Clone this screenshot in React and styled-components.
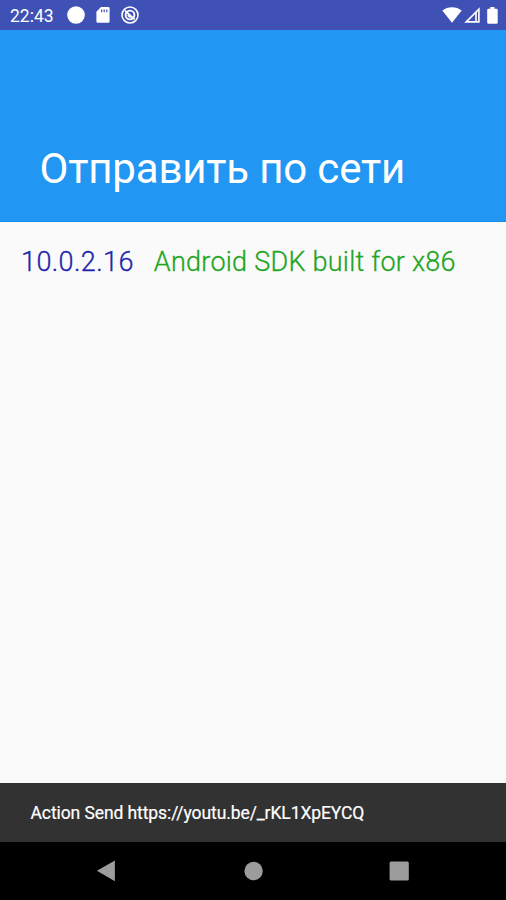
import React from "react";
import styled, { createGlobalStyle } from "styled-components";

//list of devices found on the local network
const devices = [{ ip: "10.0.2.16", name: "Android SDK built for x86" }];

const StatusBar = () => {
  return (
    <StatusWrapper>
      <Clock>22:43</Clock>
      <Notifications>
        <svg width="18" height="18" viewBox="0 0 18 18">
          <circle cx="9" cy="9" r="8.8" fill="#fff" />
        </svg>
        <svg width="14" height="16" viewBox="0 0 14 16">
          <path
            fill="#fff"
            fillRule="evenodd"
            d="M5 0h7.2Q13.6 0 13.6 1.4v12.8q0 1.5-1.4 1.5H1.8Q.4 15.7.4 14.2V4.8zM5 2.6v2.6h1.2V2.6zm2.6 0v2.6h1.2V2.6zm2.6 0v2.6h1.2V2.6z"
          />
        </svg>
        <svg width="18" height="18" viewBox="0 0 18 18">
          <g fill="none" stroke="#fff">
            <circle cx="9" cy="9" r="8" strokeWidth="1.6" />
            <circle cx="9" cy="9" r="4.4" strokeWidth="1.9" />
            <path strokeWidth="1.8" d="M4 4.7l9.6 8.6M7.2 8.6q.2 2.2 3.2 2.3" />
          </g>
        </svg>
      </Notifications>
      <SystemIcons>
        <svg width="20" height="16" viewBox="0 0 20 16">
          <path fill="#fff" d="M10 15.8.3 3.6Q4.4.2 10 .2t9.7 3.4z" />
        </svg>
        <svg width="16" height="16" viewBox="0 0 16 16">
          <path
            fill="#fff"
            fillRule="evenodd"
            d="M15.7.2v15.6H.2zM11.2 7.1l-6.9 6.9h6.9zM12.8 5.4v8.6h1.3V4.1z"
          />
        </svg>
        <svg width="11" height="17" viewBox="0 0 11 17">
          <path
            fill="#fff"
            d="M3.3 0h4.2v1.7h1.9q1.3 0 1.3 1.3v12.5q0 1.3-1.3 1.3H1.5Q.2 16.8.2 15.5V3q0-1.3 1.3-1.3h1.8z"
          />
        </svg>
      </SystemIcons>
    </StatusWrapper>
  );
};

const NavigationBar = () => {
  return (
    <NavWrapper>
      <NavButton aria-label="Back">
        <svg width="20" height="22" viewBox="0 0 20 22">
          <path fill="#9c9c9c" d="M17.9.4v20.8L-.1 10.8z" />
        </svg>
      </NavButton>
      <NavButton aria-label="Home">
        <svg width="20" height="20" viewBox="0 0 20 20">
          <circle cx="10.6" cy="10" r="9.2" fill="#9c9c9c" />
        </svg>
      </NavButton>
      <NavButton aria-label="Overview">
        <svg width="20" height="20" viewBox="0 0 20 20">
          <rect x=".6" y=".5" width="19.2" height="19" rx="1.5" fill="#9c9c9c" />
        </svg>
      </NavButton>
    </NavWrapper>
  );
};

const App = () => {
  return (
    <Wrapper>
      <GlobalStyle />
      <StatusBar />
      <Header>
        <Title>Отправить по сети</Title>
      </Header>
      <DeviceList>
        {devices.map((device) => {
          return (
            <Device key={device.ip}>
              <Address>{device.ip}</Address>
              <DeviceName>{device.name}</DeviceName>
            </Device>
          );
        })}
      </DeviceList>
      <Snackbar>
        <Message>Action Send https://youtu.be/_rKL1XpEYCQ</Message>
      </Snackbar>
      <NavigationBar />
    </Wrapper>
  );
};

export default App;

const GlobalStyle = createGlobalStyle`
  body {
    margin: 0;
    font-family: Roboto, sans-serif;
  }

  svg {
    display: block;
  }
`;

const Wrapper = styled.div`
  height: 900px;
  background-color: #fafafa;
  display: flex;
  flex-direction: column;
  overflow: hidden;
`;

const StatusWrapper = styled.div`
  box-sizing: border-box;
  height: 30px;
  padding: 0 8px 0 10px;
  background-color: #3f51b5;
  color: white;
  display: flex;
  align-items: center;
`;

const Clock = styled.span`
  width: 57px;
  font-size: 17.5px;
  line-height: 30px;
  padding-top: 2px;
`;

const Notifications = styled.div`
  display: flex;
  align-items: center;
  gap: 11px;
`;

const SystemIcons = styled.div`
  margin-left: auto;
  display: flex;
  align-items: center;
  gap: 2px;

  svg:last-child {
    margin-left: 5px;
  }
`;

const Header = styled.header`
  box-sizing: border-box;
  height: 192px;
  padding: 0 39.5px 27px;
  background-color: #2196f3;
  border-bottom: 1px solid #168be6;
  display: flex;
  align-items: flex-end;
`;

const Title = styled.h1`
  margin: 0;
  color: white;
  font-size: 42px;
  font-weight: 400;
  line-height: 50px;
  letter-spacing: -0.17px;
  white-space: nowrap;
`;

const DeviceList = styled.main`
  flex: 1;
  padding: 22px 21px;
`;

const Device = styled.div`
  display: flex;
  gap: 20px;
  font-size: 27px;
  font-weight: 300;
  line-height: 36px;
  letter-spacing: 0.4px;
  white-space: nowrap;
  -webkit-text-stroke: 0.3px;
`;

const Address = styled.span`
  color: #2024ac;
`;

const DeviceName = styled.span`
  color: #22a522;
  letter-spacing: 0.25px;
`;

const Snackbar = styled.div`
  box-sizing: border-box;
  height: 59px;
  padding: 0 30.5px;
  background-color: #323232;
  display: flex;
  align-items: center;
`;

const Message = styled.span`
  color: white;
  font-size: 17.5px;
  line-height: 24px;
  letter-spacing: -0.09px;
  white-space: nowrap;
  -webkit-text-stroke: 0.2px;
`;

const NavWrapper = styled.nav`
  height: 58px;
  background-color: black;
  display: flex;
  justify-content: center;
  gap: 96px;
`;

const NavButton = styled.button`
  width: 50px;
  padding: 0;
  border: none;
  background: none;
  display: flex;
  align-items: center;
  justify-content: center;

  svg {
    overflow: visible;
  }
`;
